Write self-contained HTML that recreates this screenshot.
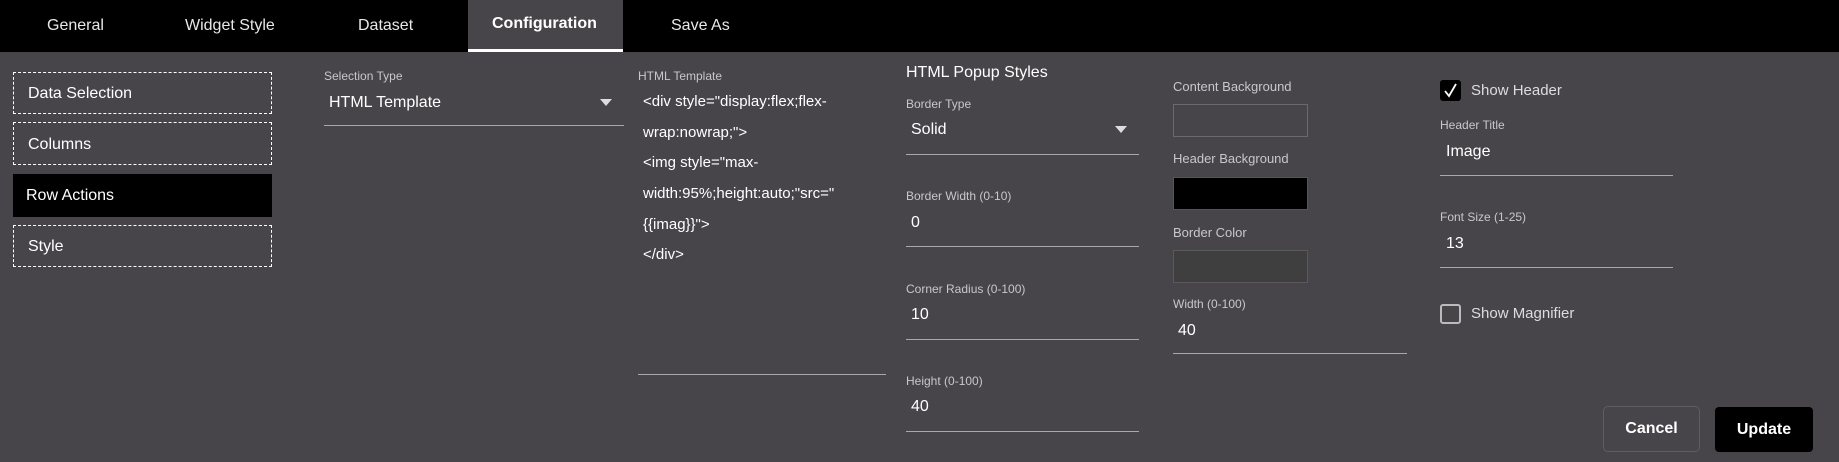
<!DOCTYPE html>
<html><head><meta charset="utf-8"><style>
*{margin:0;padding:0;box-sizing:border-box}
body{width:1839px;height:462px;background:#47444a;font-family:"Liberation Sans",sans-serif;color:#fff;position:relative;overflow:hidden}
.a{position:absolute;white-space:nowrap}
.top{position:absolute;left:0;top:0;width:1839px;height:52px;background:#000}
.tab{position:absolute;top:0;height:52px;line-height:52px;font-size:16px;color:#e8e8e8}
.lbl{position:absolute;font-size:12px;color:#c8c8c8;line-height:14px;white-space:nowrap}
.val{position:absolute;font-size:16px;line-height:20px;white-space:nowrap}
.ul{position:absolute;height:1px;background:#a9a9a9}
.box{position:absolute;left:13px;width:259px;border:1px dashed #fff;font-size:16px;padding-left:14px}
.arr{position:absolute;width:0;height:0;border-left:6px solid transparent;border-right:6px solid transparent;border-top:7px solid #ddd}
.tl{position:absolute;left:643px;font-size:15px;line-height:20px}
</style></head><body>
<div class="top"></div>
<div class="tab" style="left:47px">General</div>
<div class="tab" style="left:185px">Widget Style</div>
<div class="tab" style="left:358px">Dataset</div>
<div class="a" style="left:468px;top:0;width:155px;height:52px;background:#47444a;border-bottom:3px solid #fff"></div>
<div class="tab" style="left:492px;font-weight:bold;color:#fff;line-height:48px">Configuration</div>
<div class="tab" style="left:671px">Save As</div>

<div class="box" style="top:72px;height:42px;line-height:42px">Data Selection</div>
<div class="box" style="top:122px;height:43px;line-height:43px">Columns</div>
<div class="box" style="top:174px;height:43px;line-height:43px;background:#000;border:none;padding-left:13px">Row Actions</div>
<div class="box" style="top:225px;height:42px;line-height:42px">Style</div>

<div class="lbl" style="left:324px;top:69px">Selection Type</div>
<div class="val" style="left:329px;top:93px">HTML Template</div>
<div class="arr" style="left:600px;top:99px"></div>
<div class="ul" style="left:324px;top:125px;width:300px"></div>

<div class="lbl" style="left:638px;top:69px">HTML Template</div>
<div class="tl" style="top:92px">&lt;div style="display:flex;flex-</div>
<div class="tl" style="top:123px">wrap:nowrap;"&gt;</div>
<div class="tl" style="top:153px">&lt;img style="max-</div>
<div class="tl" style="top:184px">width:95%;height:auto;"src="</div>
<div class="tl" style="top:215px">{{imag}}"&gt;</div>
<div class="tl" style="top:245px">&lt;/div&gt;</div>
<div class="ul" style="left:638px;top:374px;width:248px"></div>

<div class="val" style="left:906px;top:63px;font-size:16px">HTML Popup Styles</div>
<div class="lbl" style="left:906px;top:97px">Border Type</div>
<div class="val" style="left:911px;top:120px">Solid</div>
<div class="arr" style="left:1115px;top:126px"></div>
<div class="ul" style="left:906px;top:154px;width:233px"></div>
<div class="lbl" style="left:906px;top:189px">Border Width (0-10)</div>
<div class="val" style="left:911px;top:213px">0</div>
<div class="ul" style="left:906px;top:246px;width:233px"></div>
<div class="lbl" style="left:906px;top:282px">Corner Radius (0-100)</div>
<div class="val" style="left:911px;top:305px">10</div>
<div class="ul" style="left:906px;top:339px;width:233px"></div>
<div class="lbl" style="left:906px;top:374px">Height (0-100)</div>
<div class="val" style="left:911px;top:397px">40</div>
<div class="ul" style="left:906px;top:431px;width:233px"></div>

<div class="lbl" style="left:1173px;top:80px;font-size:13px">Content Background</div>
<div class="a" style="left:1173px;top:104px;width:135px;height:33px;border:1px solid #6a6a6a"></div>
<div class="lbl" style="left:1173px;top:152px;font-size:13px">Header Background</div>
<div class="a" style="left:1173px;top:177px;width:135px;height:33px;border:1px solid #555;background:#000"></div>
<div class="lbl" style="left:1173px;top:226px;font-size:13px">Border Color</div>
<div class="a" style="left:1173px;top:250px;width:135px;height:33px;border:1px solid #5a5a5a;background:#3f3f3f"></div>
<div class="lbl" style="left:1173px;top:297px">Width (0-100)</div>
<div class="val" style="left:1178px;top:321px">40</div>
<div class="ul" style="left:1173px;top:353px;width:234px"></div>

<div class="a" style="left:1440px;top:80px;width:21px;height:21px;background:#000;border-radius:3px"></div>
<svg class="a" style="left:1440px;top:80px" width="21" height="21"><path d="M5 11 L9 16 L16 4" stroke="#fff" stroke-width="1.8" fill="none"/></svg>
<div class="val" style="left:1471px;top:81px;font-size:15px;color:#ddd">Show Header</div>
<div class="lbl" style="left:1440px;top:118px">Header Title</div>
<div class="val" style="left:1446px;top:142px">Image</div>
<div class="ul" style="left:1440px;top:175px;width:233px"></div>
<div class="lbl" style="left:1440px;top:210px">Font Size (1-25)</div>
<div class="val" style="left:1446px;top:234px">13</div>
<div class="ul" style="left:1440px;top:267px;width:233px"></div>
<div class="a" style="left:1440px;top:304px;width:21px;height:20px;border:2px solid #bbb;border-radius:3px"></div>
<div class="val" style="left:1471px;top:304px;font-size:15px;color:#ddd">Show Magnifier</div>

<div class="a" style="left:1603px;top:406px;width:97px;height:46px;border:1px solid #5e5e5e;border-radius:5px;text-align:center;line-height:44px;font-size:16px;font-weight:bold">Cancel</div>
<div class="a" style="left:1715px;top:407px;width:98px;height:45px;background:#000;border-radius:4px;text-align:center;line-height:45px;font-size:16px;font-weight:bold">Update</div>
</body></html>
